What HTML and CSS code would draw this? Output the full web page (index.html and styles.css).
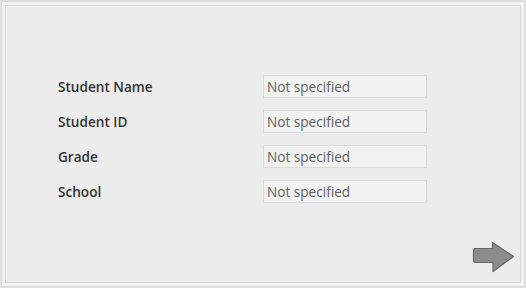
FILE: index.html
```html
<!DOCTYPE html>
<html lang="en">
<head>
    <meta charset="UTF-8">
    <meta name="viewport" content="width=device-width, initial-scale=1.0">
    <title>Student Details</title>
    <link rel="stylesheet" href="styles.css">
</head>
<body>
    <div class="frame">
        <div class="panel">
            <div class="details">
                <div class="label">Student Name</div>
                <input class="field" type="text" placeholder="Not specified">

                <div class="label">Student ID</div>
                <input class="field" type="text" placeholder="Not specified">

                <div class="label">Grade</div>
                <input class="field" type="text" placeholder="Not specified">

                <div class="label">School</div>
                <input class="field" type="text" placeholder="Not specified">
            </div>

            <div class="footer">
                <button class="next" title="Next">
                    <svg width="44" height="32" viewBox="0 0 44 32">
                        <path d="M3 7.5 H20.5 V1.5 L41.5 15.5 L21 30.5 V21.5 H3 Q1.5 21.5 1.5 20 V9 Q1.5 7.5 3 7.5 Z"
                              fill="#8c8c8c" stroke="#666" stroke-width="1.2" stroke-linejoin="round"/>
                    </svg>
                </button>
            </div>
        </div>
    </div>
</body>
</html>
```

FILE: styles.css
```css
* {
    margin: 0;
    padding: 0;
    box-sizing: border-box;
}

html, body {
    height: 100%;
}

body {
    font-family: 'Open Sans', 'Liberation Sans', sans-serif;
    background: #f2f2f2;
    color: #333;
}

.frame {
    height: 100%;
    border: 2px solid #dedede;
    padding: 3px;
}

.panel {
    height: 100%;
    background: #ececec;
    border: 1px solid #d6d6d6;
    box-shadow: inset 1px 1px 0 #f6f6f6;
    display: flex;
    flex-direction: column;
    padding: 69px 0 0 52px;
}

.details {
    display: grid;
    grid-template-columns: 205px 164px;
    row-gap: 12px;
    align-items: center;
}

.label {
    font-size: 13.6px;
    font-weight: 600;
    color: #333;
}

.field {
    height: 23px;
    width: 164px;
    border: 1px solid #dadada;
    background: #f2f2f2;
    font-family: inherit;
    font-size: 13.6px;
    padding: 0 3px;
    color: #555;
    outline: none;
}

.field::placeholder {
    color: #5f5f5f;
}

.footer {
    margin-top: auto;
    display: flex;
    justify-content: flex-end;
    padding: 0 4px 9px 0;
}

.next {
    background: none;
    border: none;
    cursor: pointer;
    line-height: 0;
}
```
